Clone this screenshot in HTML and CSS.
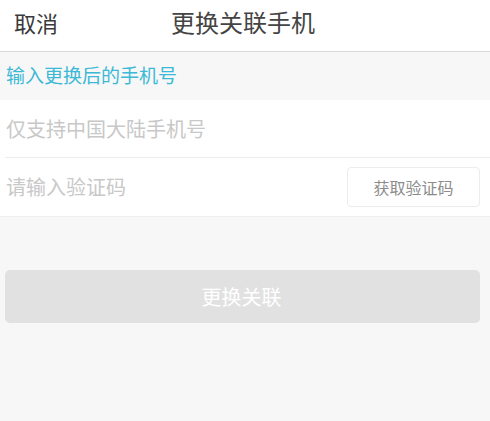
FILE: index.html
```html
<!DOCTYPE html>
<html lang="zh-CN">
<head>
<meta charset="utf-8">
<title>更换关联手机</title>
<link rel="stylesheet" href="styles.css">
</head>
<body>
<header class="topbar">
  <span class="cancel">取消</span>
  <span class="title">更换关联手机</span>
  <span class="spacer"></span>
</header>
<div class="section-label">输入更换后的手机号</div>
<div class="form">
  <div class="row row-phone">
    <span class="placeholder">仅支持中国大陆手机号</span>
  </div>
  <div class="divider"></div>
  <div class="row row-code">
    <span class="placeholder">请输入验证码</span>
    <span class="code-btn">获取验证码</span>
  </div>
</div>
<div class="submit">更换关联</div>
</body>
</html>
```

FILE: styles.css
```css
* { box-sizing: border-box; }
html, body { margin: 0; padding: 0; }
body {
  background: #f7f7f7;
  font-family: "Noto Sans CJK SC", "Noto Sans", sans-serif;
  width: 490px;
  height: 421px;
  overflow: hidden;
}
.topbar {
  height: 52px;
  background: #ffffff;
  border-bottom: 1px solid #d9d9d9;
  display: grid;
  grid-template-columns: 1fr auto 1fr;
  align-items: center;
}
.cancel {
  padding-left: 14px;
  font-size: 22px;
  line-height: 30px;
  color: #3a3a3a;
  padding-bottom: 8px;
}
.title {
  font-size: 24px;
  line-height: 30px;
  color: #444444;
  padding-right: 4px;
  padding-bottom: 8px;
}
.section-label {
  height: 48px;
  line-height: 46px;
  padding-left: 6px;
  font-size: 19px;
  color: #3cb9d6;
}
.form {
  background: #ffffff;
  border-bottom: 1px solid #eeeeee;
}
.row {
  display: flex;
  align-items: center;
  justify-content: space-between;
  padding-left: 6px;
}
.row-phone {
  height: 57px;
}
.divider {
  height: 1px;
  margin-left: 5px;
  background: #ececec;
}
.row-code {
  height: 58px;
  padding-right: 10px;
}
.placeholder {
  font-size: 20px;
  color: #c8c8c8;
  line-height: 28px;
}
.code-btn {
  width: 133px;
  height: 40px;
  border: 1px solid #ececec;
  border-radius: 4px;
  display: flex;
  align-items: center;
  justify-content: center;
  font-size: 16px;
  color: #8c8c8c;
}
.submit {
  margin: 53px 10px 0 5px;
  height: 53px;
  border-radius: 5px;
  background: #e1e1e1;
  color: #ffffff;
  font-size: 20px;
  display: flex;
  align-items: center;
  justify-content: center;
  padding-right: 2px;
}
```
